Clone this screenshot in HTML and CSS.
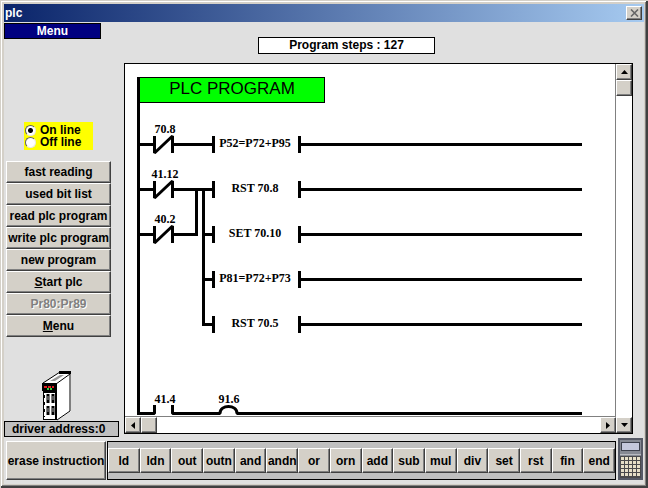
FILE: index.html
```html
<!DOCTYPE html>
<html lang="en">
<head>
    <meta charset="UTF-8">
    <title>plc</title>
    <link rel="stylesheet" href="styles.css">
</head>
<body>

<div class="window">
    <div class="title-bar">
        <span>plc</span>
        <button class="close" aria-label="Close">
            <svg width="9" height="8" viewBox="0 0 9 8"><path d="M1 0.5L8 7.5M8 0.5L1 7.5" stroke="#666" stroke-width="1.6"/></svg>
        </button>
    </div>

    <div class="content">
        <div class="sidebar">
            <div class="menu-title">Menu</div>

            <div class="line-mode">
                <label><input type="radio" name="line" checked>On line</label>
                <label><input type="radio" name="line">Off line</label>
            </div>

            <div class="actions">
                <button>fast reading</button>
                <button>used bit list</button>
                <button>read plc program</button>
                <button>write plc program</button>
                <button>new program</button>
                <button><u>S</u>tart plc</button>
                <button disabled>Pr80:Pr89</button>
                <button><u>M</u>enu</button>
            </div>

            <svg class="driver-icon" width="30" height="50" viewBox="0 0 30 50">
                <path d="M1 13L18 1H29V40L16 49H1Z" fill="#fff"/>
                <path d="M17 0H29V3H17Z"/>
                <path d="M1 12L18 1M14 13L28 3M28 2V40L15 49" fill="none" stroke="#000"/>
                <path d="M8 10L18 4H22L13 10Z" fill="#999"/>
                <path d="M0 12H15V49H1V20H0Z"/>
                <path d="M2 22H13V48H2Z" fill="#fff"/>
                <path d="M2 16H12" stroke="#e02020" stroke-width="2" stroke-dasharray="3 1"/>
                <path d="M5 18H11" stroke="#30d040" stroke-width="2" stroke-dasharray="2 1"/>
                <path d="M6 23V46M11 23V46" stroke="#000" stroke-width="3" stroke-dasharray="9 3"/>
                <path d="M6 25V46M11 25V46" stroke="#aaa" stroke-dasharray="4 8"/>
                <path d="M2 24V46" stroke="#000" stroke-width="2" stroke-dasharray="3 4"/>
            </svg>
            <div class="driver-address">driver address:0</div>
        </div>

        <div class="main">
            <div class="steps">Program steps : 127</div>

            <div class="editor">
                <div class="view">
                    <svg class="ladder" width="490" height="351">
                        <rect x="13.5" y="13.5" width="186" height="25" fill="#0f0" stroke="#000"/>
                        <text class="heading" x="107" y="30">PLC PROGRAM</text>

                        <g class="wires">
                            <!-- rail -->
                            <path d="M13.5 13V351"/>
                            <!-- contacts -->
                            <path d="M14 80.5H29M29.5 72V89L47.5 72V89M48 80.5H87"/>
                            <path d="M14 125.5H29M29.5 117V134L47.5 117V134M48 125.5H87"/>
                            <path d="M14 170.5H29M29.5 162V179L47.5 162V179M48 170.5H72"/>
                            <path d="M71.5 125V172M78.5 125V262"/>
                            <path d="M78 170.5H88M78 215.5H88M78 260.5H88"/>
                            <!-- coils -->
                            <path d="M88.5 72V89M174.5 72V89M175 80.5H457"/>
                            <path d="M88.5 117V134M174.5 117V134M175 125.5H457"/>
                            <path d="M88.5 162V179M174.5 162V179M175 170.5H457"/>
                            <path d="M88.5 207V224M174.5 207V224M175 215.5H457"/>
                            <path d="M88.5 252V269M174.5 252V269M175 260.5H457"/>
                            <!-- last rung -->
                            <path d="M14 349.5H29.5V341M47.5 341V349.5H95C95 340 112 340 112 349.5H457"/>
                        </g>

                        <text x="40" y="69">70.8</text>
                        <text x="40" y="114">41.12</text>
                        <text x="40" y="159">40.2</text>
                        <text x="40" y="339">41.4</text>
                        <text x="104" y="339">91.6</text>
                        <text x="130" y="83">P52=P72+P95</text>
                        <text x="130" y="128">RST 70.8</text>
                        <text x="130" y="173">SET 70.10</text>
                        <text x="130" y="218">P81=P72+P73</text>
                        <text x="130" y="263">RST 70.5</text>
                    </svg>
                </div>
                <div class="scroll-v">
                    <button aria-label="Scroll up"><svg width="7" height="4"><path d="M0 4L3.5 0L7 4Z"/></svg></button>
                    <button aria-label="Vertical position"></button>
                </div>
                <div class="scroll-h">
                    <button aria-label="Scroll left"><svg width="4" height="7"><path d="M4 0L0 3.5L4 7Z"/></svg></button>
                    <button aria-label="Horizontal position"></button>
                    <button class="right" aria-label="Scroll right"><svg width="4" height="7"><path d="M0 0L4 3.5L0 7Z"/></svg></button>
                    <button aria-label="Scroll down"><svg width="7" height="4"><path d="M0 0L3.5 4L7 0Z"/></svg></button>
                </div>
            </div>
        </div>
    </div>

    <div class="toolbar">
        <button class="erase">erase instruction</button>
        <div class="keys">
            <button>ld</button>
            <button>ldn</button>
            <button>out</button>
            <button>outn</button>
            <button>and</button>
            <button>andn</button>
            <button>or</button>
            <button>orn</button>
            <button>add</button>
            <button>sub</button>
            <button>mul</button>
            <button>div</button>
            <button>set</button>
            <button>rst</button>
            <button>fin</button>
            <button>end</button>
        </div>
        <button class="calc" aria-label="Calculator">
            <svg width="25" height="42" viewBox="0 0 25 42">
                <rect width="25" height="42" fill="#565a66"/>
                <rect x="2" y="2" width="21" height="38" fill="#858993"/>
                <rect x="3.5" y="4.5" width="18" height="8" fill="#c4c8dc" stroke="#3c404c"/>
                <path d="M2 16.5H23" stroke="#b8bac0"/>
                <rect x="2" y="18" width="21" height="22" fill="#4a4a4c"/>
                <path d="M3 20.5H22M3 24.5H22M3 28.5H22M3 32.5H22M3 36.5H22" stroke="#e6dfc8" stroke-width="3" stroke-dasharray="3 1"/>
            </svg>
        </button>
    </div>
</div>

</body>
</html>
```

FILE: styles.css
```css
body, html {
    margin: 0;
    padding: 0;
}

* {
    box-sizing: border-box;
}

body {
    font-family: 'Liberation Sans', Arial, sans-serif;
    font-size: 12px;
    font-weight: bold;
    line-height: 14px;
    color: #000;
}

.window {
    min-height: 100vh;
    display: flex;
    flex-direction: column;
    padding: 4px;
    background: #e0e0e0;
    box-shadow: inset 1px 1px #d4d0c8, inset -2px -2px #404040, inset 2px 2px #fff,
        inset -3px -3px #808080, inset 4px 4px #d4d0c8, inset -4px -4px #d4d0c8;
}

button {
    font: inherit;
    color: inherit;
    margin: 0;
    padding: 0;
    background: #d4d0c8;
    border: 1px solid;
    border-color: #fff #404040 #404040 #fff;
    box-shadow: inset -1px -1px #808080;
    white-space: nowrap;
}

button:disabled {
    color: #808080;
    text-shadow: 1px 1px #fff;
}

svg {
    display: block;
}

.title-bar {
    display: flex;
    align-items: center;
    justify-content: space-between;
    height: 18px;
    padding: 0 2px 0 1px;
    background: linear-gradient(to right, #0a246a, #a6caf0);
    color: #fff;
}

.close {
    display: flex;
    align-items: center;
    justify-content: center;
    width: 16px;
    height: 14px;
}

.content {
    flex: 1;
    display: flex;
}

.sidebar {
    width: 120px;
    display: flex;
    flex-direction: column;
    align-items: flex-start;
    padding-top: 1px;
}

.menu-title {
    width: 97px;
    background: #000080;
    border: 1px solid #000;
    color: #fff;
    text-align: center;
}

.line-mode {
    display: flex;
    flex-direction: column;
    margin: 83px 0 11px 20px;
    padding: 2px 0;
    width: 69px;
    background: #ff0;
}

.line-mode label {
    display: flex;
    align-items: center;
    gap: 4px;
    height: 12px;
    line-height: 12px;
}

.line-mode input {
    appearance: none;
    width: 11px;
    height: 11px;
    margin: 0 0 0 1px;
    border: 1px solid;
    border-color: #606060 #e8e8e8 #e8e8e8 #606060;
    border-radius: 50%;
    background: #fff;
}

.line-mode input:checked {
    background: radial-gradient(#000 0 2px, #fff 3px);
}

.actions {
    display: flex;
    flex-direction: column;
    width: 105px;
    margin-left: 2px;
}

.actions button {
    height: 22px;
}

.driver-icon {
    margin: auto 0 0 38px;
}

.driver-address {
    width: 115px;
    margin-bottom: 1px;
    padding-left: 7px;
    background: #c0c0c0;
    border: 1px solid #000;
}

.main {
    flex: 1;
    min-width: 0;
    display: flex;
    flex-direction: column;
    padding: 15px 11px 4px 0;
}

.steps {
    width: 177px;
    margin: 0 auto 9px 134px;
    background: #fff;
    border: 1px solid #000;
    line-height: 15px;
    text-align: center;
}

.editor {
    flex: 1;
    display: grid;
    grid-template-columns: 1fr 16px;
    grid-template-rows: 1fr 16px;
    background: #fff;
    border: 1px solid #000;
}

.view {
    overflow: hidden;
    border-right: 1px solid #808080;
    border-bottom: 1px solid #808080;
}

.wires {
    fill: none;
    stroke: #000;
    stroke-width: 3;
    stroke-linejoin: bevel;
}

.ladder text {
    font-family: 'Liberation Serif', 'Times New Roman', serif;
    font-size: 12px;
    text-anchor: middle;
}

.ladder .heading {
    font-family: 'Liberation Sans', Arial, sans-serif;
    font-size: 17px;
    font-weight: normal;
}

.scroll-v button,
.scroll-h button {
    display: flex;
    align-items: center;
    justify-content: center;
    width: 16px;
    height: 16px;
}

.scroll-h {
    grid-column: 1 / 3;
    display: flex;
}

.scroll-h .right {
    margin-left: auto;
}

.toolbar {
    display: flex;
    align-items: flex-end;
    padding: 0 1px 4px 2px;
}

.erase {
    width: 100px;
    height: 39px;
}

.keys {
    flex: 1;
    display: flex;
    align-items: center;
    height: 39px;
    margin: 0 2px 0 1px;
    background: #c0c0c0;
    border: 1px solid #000;
}

.keys button {
    flex: 1 1 0;
    min-width: 0;
    height: 25px;
}

.calc {
    border: none;
    box-shadow: none;
}
```
